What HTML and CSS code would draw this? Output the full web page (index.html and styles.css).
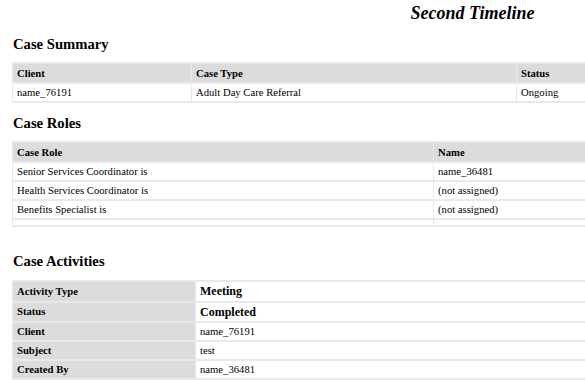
FILE: index.html
```html
<!DOCTYPE html>
<html lang="en">
<head>
<meta charset="utf-8">
<title>Second Timeline</title>
<link rel="stylesheet" href="styles.css">
</head>
<body>
<div class="page">
  <h1 class="title">Second Timeline</h1>

  <h2 class="section-title">Case Summary</h2>
  <table class="grid summary">
    <thead>
      <tr><th class="col-client">Client</th><th class="col-type">Case Type</th><th>Status</th></tr>
    </thead>
    <tbody>
      <tr><td>name_76191</td><td>Adult Day Care Referral</td><td>Ongoing</td></tr>
    </tbody>
  </table>

  <h2 class="section-title">Case Roles</h2>
  <table class="grid roles">
    <thead>
      <tr><th class="col-role">Case Role</th><th>Name</th></tr>
    </thead>
    <tbody>
      <tr><td>Senior Services Coordinator is</td><td>name_36481</td></tr>
      <tr><td>Health Services Coordinator is</td><td>(not assigned)</td></tr>
      <tr><td>Benefits Specialist is</td><td>(not assigned)</td></tr>
      <tr class="empty-row"><td></td><td></td></tr>
    </tbody>
  </table>

  <h2 class="section-title section-gap">Case Activities</h2>
  <table class="grid activity">
    <tbody>
      <tr><th class="col-label">Activity Type</th><td class="strong">Meeting</td></tr>
      <tr><th>Status</th><td class="strong">Completed</td></tr>
      <tr><th>Client</th><td>name_76191</td></tr>
      <tr><th>Subject</th><td>test</td></tr>
      <tr><th>Created By</th><td>name_36481</td></tr>
    </tbody>
  </table>
</div>
</body>
</html>
```

FILE: styles.css
```css
html, body {
  margin: 0;
  padding: 0;
  overflow: hidden;
  background: #ffffff;
}

body {
  font-family: "Liberation Serif", "Times New Roman", serif;
  color: #000000;
}

.page {
  width: 921px;
  margin-left: 12px;
}

.title {
  margin: 3px 0 0;
  font-size: 18px;
  font-style: italic;
  font-weight: bold;
  text-align: center;
  line-height: 21px;
}

.section-title {
  margin: 12px 0 9px 1px;
  font-size: 14.67px;
  font-weight: bold;
  line-height: 17px;
}

.section-gap {
  margin-top: 26px;
  margin-bottom: 10px;
}

.grid {
  width: 921px;
  table-layout: fixed;
  border-collapse: separate;
  border-spacing: 1px 2px;
  background: #e9e9e9;
  margin: 0;
}

.grid th,
.grid td {
  box-sizing: border-box;
  padding: 2px 4px;
  font-size: 10.67px;
  line-height: 13px;
  text-align: left;
  vertical-align: middle;
}

.grid th {
  font-weight: bold;
  background: #dcdcdc;
}

.grid td {
  background: #ffffff;
}

.grid thead th {
  padding-top: 3px;
  padding-bottom: 2px;
}

.col-client {
  width: 178px;
}

.col-type {
  width: 324px;
}

.col-role {
  width: 420px;
}

.col-label {
  width: 182px;
}

.empty-row td {
  height: 5px;
  padding: 0;
  line-height: 0;
  font-size: 0;
}

.activity td.strong {
  font-size: 12px;
  font-weight: bold;
  line-height: 14.5px;
}
```
